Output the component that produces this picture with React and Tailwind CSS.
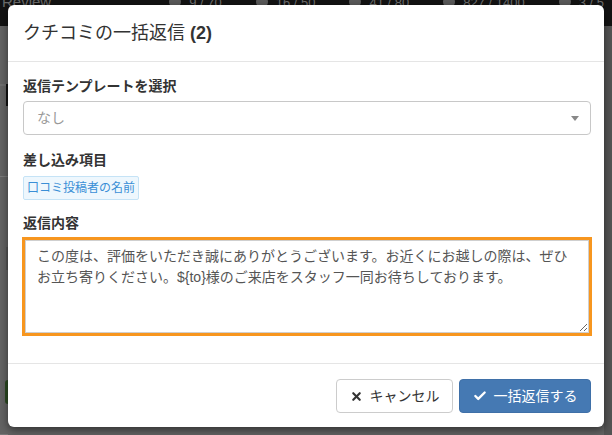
import { Check, X } from "lucide-react";

const font = { fontFamily: '"Liberation Sans", "Noto Sans CJK JP", sans-serif' };

function TopStat({ children }) {
  return (
    <div className="flex items-center gap-2 text-[13px] text-[#6f6f6f]">
      <span className="inline-block w-[12px] h-[12px] rounded-full bg-[#5a5a5a]"></span>
      {children}
    </div>
  );
}

export default function App() {
  const message =
    "この度は、評価をいただき誠にありがとうございます。お近くにお越しの際は、ぜひお立ち寄りください。${to}様のご来店をスタッフ一同お待ちしております。";

  return (
    <div className="relative w-[612px] h-[435px] overflow-hidden bg-[#636363]" style={font}>
      {/* page behind the backdrop */}
      <div className="h-[26px] bg-[#131313] flex items-start overflow-hidden">
        <div className="-mt-[9px] flex items-center w-full pl-[2px] pr-[8px]">
          <span className="text-[15px] text-[#6a6a6a]">Review</span>
          <div className="ml-auto flex gap-[34px]">
            <TopStat>9 / 70</TopStat>
            <TopStat>16 / 50</TopStat>
            <TopStat>41 / 80</TopStat>
            <TopStat>827 / 1400</TopStat>
            <TopStat>3 / 5</TopStat>
          </div>
        </div>
      </div>
      <div className="flex h-[409px]">
        <div className="w-[8px] flex flex-col">
          <div className="h-[2px] bg-[#6e6e6e] mt-[58px]"></div>
          <div className="h-[28px] w-[3px] bg-[#111] ml-[6px] -mt-[2px]"></div>
          <div className="h-[1px] bg-[#7a7a7a] mt-[70px]"></div>
          <div className="h-[28px] w-[2px] bg-[#555] ml-[6px] mt-[70px]"></div>
          <div className="h-[30px] w-[3px] bg-[#2c4a22] ml-[5px] mt-[110px] rounded-l"></div>
          <div className="h-[1px] bg-[#777] mt-[30px]"></div>
        </div>
        <div className="flex-1"></div>
        <div className="w-[8px] bg-[#545454]"></div>
      </div>

      {/* modal */}
      <div className="absolute left-[8px] top-[5px] w-[596px] h-[422px] bg-white rounded-[6px] shadow-[0_3px_9px_rgba(0,0,0,0.5)] flex flex-col">
        <div className="h-[57px] px-[15px] flex items-center border-b border-[#e5e5e5]">
          <h4 className="text-[18px] text-[#333]">
            クチコミの一括返信 <span className="font-bold">(2)</span>
          </h4>
        </div>

        <div className="px-[15px] pt-[14px] pb-[27px]">
          <div className="text-[14px] leading-[20px] font-bold text-[#333] mb-[5px]">返信テンプレートを選択</div>
          <div className="h-[34px] mr-[-2px] border border-[#c8c8c8] rounded-[4px] flex items-center px-[13px]">
            <span className="text-[14px] text-[#999]">なし</span>
            <span className="ml-auto mr-[-2px] w-0 h-0 border-l-[4px] border-r-[4px] border-t-[5px] border-l-transparent border-r-transparent border-t-[#888]"></span>
          </div>

          <div className="mt-[15px] text-[14px] leading-[20px] font-bold text-[#333] mb-[5px]">差し込み項目</div>
          <div className="inline-flex h-[24px] items-center px-[3px] border border-[#c5e3f6] bg-[#eef7fd] rounded-[2px] text-[12px] text-[#3a8fd6]">
            口コミ投稿者の名前
          </div>

          <div className="mt-[13px] text-[14px] leading-[20px] font-bold text-[#333] mb-[4px]">返信内容</div>
          <div className="-ml-[1px] mr-[-3px] border-[3px] border-[#f7961f] h-[99px]">
            <textarea
              readOnly
              value={message}
              className="w-full h-full block resize-y border border-[#cfcfcf] px-[11px] py-[5px] text-[14px] leading-[21px] text-[#555] outline-none"
              style={font}
            />
          </div>
        </div>

        <div className="border-t border-[#e5e5e5] flex-1 flex items-start justify-end pt-[15px] pr-[13px] gap-[6px]">
          <button className="h-[34px] w-[117px] border border-[#ccc] rounded-[4px] bg-white text-[14px] text-[#333] flex items-center justify-center gap-[7px]">
            <X size={13} strokeWidth={4} className="text-[#333]" />
            キャンセル
          </button>
          <button className="h-[34px] w-[132px] rounded-[4px] bg-[#4579b3] border border-[#3f70a8] text-[14px] text-white flex items-center justify-center gap-[7px]">
            <Check size={14} strokeWidth={4} />
            一括返信する
          </button>
        </div>
      </div>
    </div>
  );
}
